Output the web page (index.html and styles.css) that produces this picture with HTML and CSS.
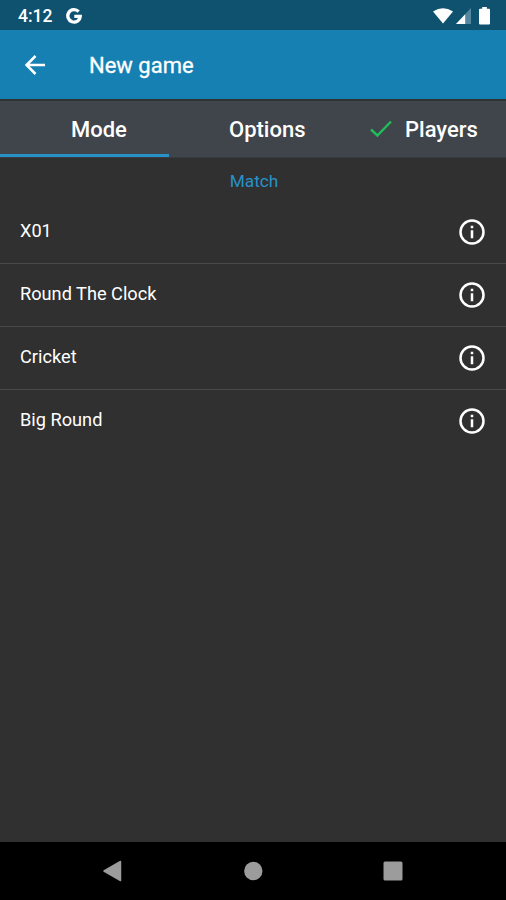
FILE: index.html
```html
<!DOCTYPE html>
<html lang="en">
<head>
<meta charset="utf-8">
<title>New game</title>
<link rel="stylesheet" href="styles.css">
</head>
<body>
<div class="screen">
  <div class="status">
    <span class="time">4:12</span>
    <svg class="google" width="16" height="16" viewBox="0 0 16 16"><path d="M12.600 3.700A6.200 6.200 0 1 0 14.200 8.300H8.300" fill="none" stroke="#fff" stroke-width="3.300"/></svg>
    <svg class="wifi" width="20" height="16" viewBox="0 0 20 16"><path d="M0 3.600Q10-3 20 3.600L10 15.600z" fill="#fff"/></svg>
    <svg class="signal" width="15" height="16" viewBox="0 0 15 16"><path d="M15 0V16H0z" fill="#5487a0"/><path d="M9.200 6.200V16H0z" fill="#fff"/></svg>
    <svg class="battery" width="11" height="18" viewBox="0 0 11 18"><path d="M3.200 0h4.600v1.800H10q1 0 1 1V16.500q0 1-1 1H1q-1 0-1-1V2.800q0-1 1-1h2.200z" fill="#fff"/></svg>
  </div>
  <header class="appbar">
    <svg class="back" width="20" height="20" viewBox="0 0 20 20"><path d="M10.500 1L1.500 10l9 9M1.500 10H20" fill="none" stroke="#fff" stroke-width="2.500"/></svg>
    <h1 class="title">New game</h1>
  </header>
  <nav class="tabs">
    <div class="tab active"><span class="mode">Mode</span></div>
    <div class="tab"><span class="options">Options</span></div>
    <div class="tab"><svg class="check" width="22" height="18" viewBox="0 0 22 18"><path d="M1 9.500l6.400 6L21 1.500" fill="none" stroke="#20bd5b" stroke-width="2.400"/></svg><span class="players">Players</span></div>
  </nav>
  <main class="content">
    <h2 class="section">Match</h2>
    <ul class="list">
      <li class="row"><span>X01</span><svg class="info" width="26" height="26" viewBox="0 0 26 26"><circle cx="13" cy="13" r="11.500"/><path d="M13 11.300v8M13 6.800v2.500"/></svg></li>
      <li class="row"><span>Round The Clock</span><svg class="info" width="26" height="26" viewBox="0 0 26 26"><circle cx="13" cy="13" r="11.500"/><path d="M13 11.300v8M13 6.800v2.500"/></svg></li>
      <li class="row"><span>Cricket</span><svg class="info" width="26" height="26" viewBox="0 0 26 26"><circle cx="13" cy="13" r="11.500"/><path d="M13 11.300v8M13 6.800v2.500"/></svg></li>
      <li class="row"><span>Big Round</span><svg class="info" width="26" height="26" viewBox="0 0 26 26"><circle cx="13" cy="13" r="11.500"/><path d="M13 11.300v8M13 6.800v2.500"/></svg></li>
    </ul>
  </main>
  <footer class="navbar">
    <svg width="20" height="22" viewBox="0 0 20 22"><path d="M18.500 1.500V20.500L2 11z" fill="#9c9c9c" stroke="#9c9c9c" stroke-width="1.500" stroke-linejoin="round"/></svg>
    <svg width="20" height="20" viewBox="0 0 20 20"><circle cx="10.300" cy="10" r="9.200" fill="#9c9c9c"/></svg>
    <svg width="20" height="20" viewBox="0 0 20 20"><rect x=".5" y=".5" width="19" height="19" rx="1.500" fill="#9c9c9c"/></svg>
  </footer>
</div>
</body>
</html>
```
FILE: styles.css
```css
* { box-sizing: border-box; }
body { margin: 0; font-family: Roboto, "Liberation Sans", sans-serif; color: #fff; }
svg { display: block; flex: none; }
.screen { width: 506px; height: 900px; display: flex; flex-direction: column; background: #303030; overflow: hidden; }
.status { height: 30px; flex: none; display: flex; align-items: center; padding: 1px 16px 0 18px; background: #0f5270; }
.time { width: 48px; font-size: 17.5px; font-weight: 500; line-height: 28px; padding-top: 1px; }
.google { margin-top: 1px; }
.wifi { margin-left: auto; }
.signal { margin-left: 3px; }
.battery { margin-left: 8px; }
.appbar { height: 69px; flex: none; display: flex; align-items: center; padding: 0 25px; background: #1780b3; }
.title { margin: 2px 0 0 44px; font-size: 22px; font-weight: 400; -webkit-text-stroke: 0.3px #fff; line-height: 28px; }
.tabs { height: 59px; flex: none; display: grid; grid-template-columns: 169px 168px 169px; background: #40444b; border-top: 2px solid #2f3433; border-bottom: 1px solid #383b3f; }
.tab { display: flex; align-items: center; font-size: 22px; font-weight: 500; line-height: 28px; padding-top: 2px; }
.active { box-shadow: inset 0 -3px #2892c8; }
.mode { margin-left: 71px; }
.options { margin-left: 60px; }
.check { margin-left: 33px; margin-top: -2px; }
.players { margin-left: 13px; }
.content { flex: 1; }
.section { margin: 0; padding: 12px 0 0 2px; height: 43px; font-size: 17.3px; font-weight: 400; line-height: 22px; text-align: center; color: #2892c8; }
.list { margin: 0; padding: 0; list-style: none; }
.row { height: 63px; display: flex; align-items: center; justify-content: space-between; padding: 0 21px 0 20px; border-bottom: 1px solid #494949; font-size: 18.2px; line-height: 24px; }
.row span { margin-top: -2px; }
.row:last-child { border-bottom-color: transparent; }
.info { fill: none; stroke: #fff; stroke-width: 2.5; }
.navbar { height: 58px; flex: none; display: flex; align-items: center; justify-content: space-between; padding: 0 103px 0 102px; background: #000; }
```
